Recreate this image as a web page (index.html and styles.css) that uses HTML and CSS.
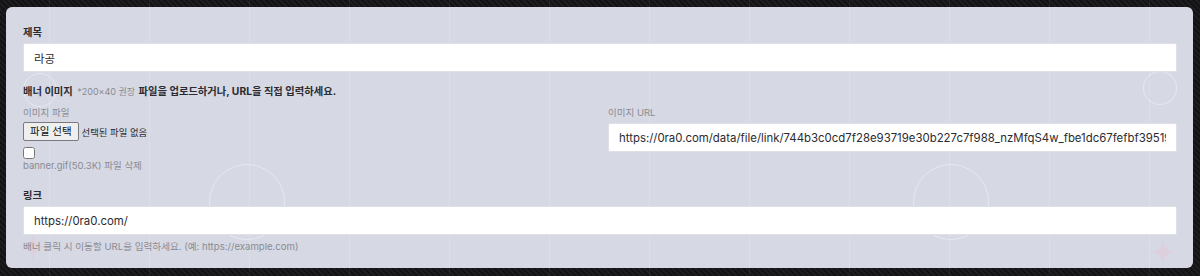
FILE: index.html
```html
<!DOCTYPE html>
<html lang="ko">

<head>
    <meta charset="UTF-8">
    <meta name="viewport" content="width=device-width, initial-scale=1.0">
    <title>배너 수정</title>
    <link rel="stylesheet" href="styles.css">
</head>

<body>

    <div class="panel">
        <!-- 배경 장식 -->
        <div class="deco">
            <span class="ring ring-s ring-tl"></span>
            <span class="ring ring-s ring-tr"></span>
            <span class="ring ring-l ring-ml"></span>
            <span class="ring ring-l ring-mr"></span>
            <svg class="spark spark-l" viewBox="0 0 24 24"><path d="M12 0 C13 9 15 11 24 12 C15 13 13 15 12 24 C11 15 9 13 0 12 C9 11 11 9 12 0 Z" /></svg>
            <svg class="spark spark-r" viewBox="0 0 24 24"><path d="M12 0 C13 9 15 11 24 12 C15 13 13 15 12 24 C11 15 9 13 0 12 C9 11 11 9 12 0 Z" /></svg>
        </div>

        <div class="group">
            <label class="lbl">제목</label>
            <input type="text" class="ipt" value="라공">
        </div>

        <div class="group">
            <div class="lbl">배너 이미지 <span class="hint">*200×40 권장</span> 파일을 업로드하거나, URL을 직접 입력하세요.</div>

            <div class="cols">
                <div class="col">
                    <div class="sub">이미지 파일</div>
                    <div class="filerow">
                        <span class="filebtn">파일 선택</span>
                        <span class="filename">선택된 파일 없음</span>
                    </div>
                    <input type="checkbox" class="chk">
                    <div class="sub">banner.gif(50.3K) 파일 삭제</div>
                </div>
                <div class="col">
                    <div class="sub sub-url">이미지 URL</div>
                    <input type="text" class="ipt" value="https://0ra0.com/data/file/link/744b3c0cd7f28e93719e30b227c7f988_nzMfqS4w_fbe1dc67fefbf39519">
                </div>
            </div>
        </div>

        <div class="group group-link">
            <label class="lbl">링크</label>
            <input type="text" class="ipt" value="https://0ra0.com/">
            <div class="help">배너 클릭 시 이동할 URL을 입력하세요. (예: https://example.com)</div>
        </div>
    </div>

</body>

</html>
```

FILE: styles.css
```css
body {
    margin: 0;
    height: 276px;
    font-family: Inter, "Noto Sans CJK KR", sans-serif;
    color: #2b2b30;
    background-color: #17171a;
    background-image:
        linear-gradient(90deg, transparent 49px, rgba(255, 255, 255, 0.06) 49px, rgba(255, 255, 255, 0.06) 50px, transparent 50px),
        repeating-linear-gradient(45deg, #1d1d20 0, #1d1d20 2px, #131315 2px, #131315 4px);
    background-size: 100px 100px, auto;
    overflow: hidden;
}

.panel {
    position: relative;
    margin: 7px 7px 0 6px;
    height: 261px;
    box-sizing: border-box;
    padding: 17px 16px 0 17px;
    border-radius: 6px;
    background-color: #d6d8e4;
    background-image:
        linear-gradient(90deg, transparent 43px, rgba(255, 255, 255, 0.16) 43px, rgba(255, 255, 255, 0.16) 44px, transparent 44px);
    background-size: 100px 100px;
}

/* 장식 */
.deco {
    position: absolute;
    inset: 0;
    overflow: hidden;
    border-radius: 6px;
}

.ring {
    position: absolute;
    border: 1.5px solid rgba(255, 255, 255, 0.4);
    border-radius: 50%;
}

.ring-s {
    width: 32px;
    height: 32px;
}

.ring-l {
    width: 74px;
    height: 74px;
}

.ring-tl {
    left: 17px;
    top: 66px;
}

.ring-tr {
    left: 1137px;
    top: 64px;
}

.ring-ml {
    left: 203px;
    top: 157px;
}

.ring-mr {
    left: 907px;
    top: 157px;
}

.spark {
    position: absolute;
    width: 28px;
    height: 28px;
    fill: rgba(236, 196, 210, 0.4);
}

.spark-l {
    left: 13px;
    top: 226px;
}

.spark-r {
    left: 1143px;
    top: 231px;
}

.group {
    position: relative;
    margin-bottom: 11px;
}

.group-link {
    margin-top: 14px;
}

.lbl {
    display: block;
    font-size: 10.3px;
    font-weight: 700;
    line-height: 17px;
    margin-bottom: 2px;
    color: #2b2b30;
}

.hint {
    font-size: 9px;
    font-weight: 400;
    color: #8a8b92;
    margin: 0 1px 0 2px;
}

.ipt {
    display: block;
    width: 100%;
    height: 29px;
    box-sizing: border-box;
    margin: 0;
    padding: 0 10px;
    border: 1px solid #dfe0e6;
    border-radius: 2px;
    background: #fff;
    font-family: Inter, "Noto Sans CJK KR", sans-serif;
    font-size: 11.4px;
    color: #2b2b30;
    outline: none;
}

.cols {
    display: flex;
    gap: 16px;
    margin-top: 6px;
}

.col {
    flex: 1;
    min-width: 0;
}

.sub {
    font-size: 9.5px;
    line-height: 14px;
    color: #8a8b92;
}

.sub-url {
    margin-bottom: 3px;
}

.filerow {
    display: flex;
    align-items: center;
    margin-top: 2px;
}

.filebtn {
    height: 19px;
    box-sizing: border-box;
    padding: 0 6px;
    border: 1px solid #7a7a7e;
    border-radius: 2px;
    background: #efeff0;
    font-size: 10.5px;
    line-height: 17px;
    color: #111;
}

.filename {
    margin-left: 3px;
    font-size: 9.4px;
    color: #2b2b30;
}

.chk {
    display: block;
    width: 12px;
    height: 12px;
    margin: 6px 0 0 0;
}

.help {
    margin-top: 5px;
    font-size: 9.6px;
    line-height: 14px;
    color: #8a8b92;
}
```
